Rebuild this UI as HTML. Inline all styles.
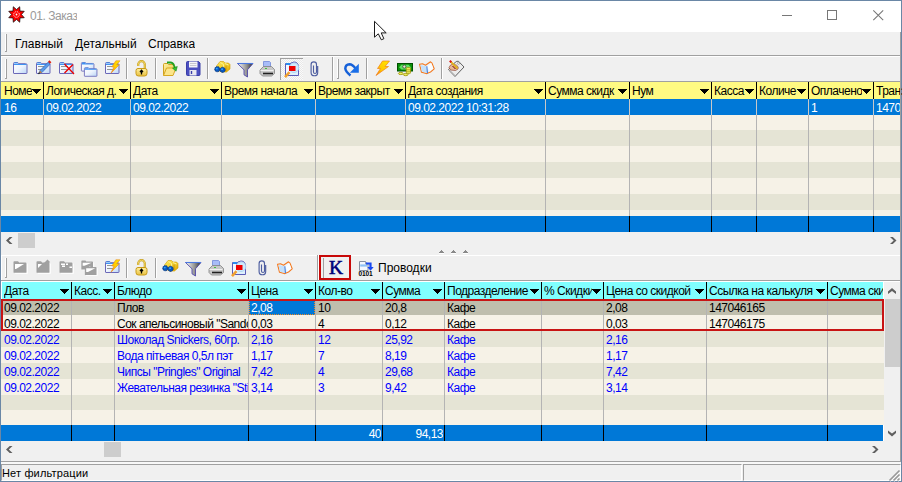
<!DOCTYPE html><html><head><meta charset="utf-8"><style>
*{margin:0;padding:0;box-sizing:border-box}
html,body{width:902px;height:482px;overflow:hidden;background:#f0f0f0;font-family:"Liberation Sans",sans-serif;font-size:12px;color:#000}
.g{letter-spacing:-0.5px}
.ab{position:absolute}
.t{position:absolute;white-space:nowrap;overflow:hidden;line-height:16px;height:16px}
.tri{position:absolute;width:0;height:0;border-left:4.5px solid transparent;border-right:4.5px solid transparent;border-top:5px solid #000}
svg{position:absolute;overflow:visible}

</style></head><body>
<div class="ab" style="left:0px;top:0px;width:902px;height:482px;background:#f0f0f0;border:1px solid #6a87a6"></div>
<div class="ab" style="left:1px;top:1px;width:900px;height:31px;background:#fff;"></div>
<svg style="left:8px;top:6px" width="17" height="17" viewBox="0 0 17 17"><path d="M11.71 0.74 L11.96 5.04 L16.26 5.29 L13.40 8.50 L16.26 11.71 L11.96 11.96 L11.71 16.26 L8.50 13.40 L5.29 16.26 L5.04 11.96 L0.74 11.71 L3.60 8.50 L0.74 5.29 L5.04 5.04 L5.29 0.74 L8.50 3.60Z" fill="#f00" stroke="#000" stroke-width="0.7" stroke-linejoin="miter"/><circle cx="8.5" cy="8.5" r="2.8" fill="none" stroke="#fff" stroke-width="1" stroke-dasharray="1.1 1.1"/><circle cx="8.5" cy="8.5" r="0.9" fill="#fff"/></svg>
<div class="t" style="left:30px;top:8px;font-size:12px;color:#9a9a9a;letter-spacing:-0.45px">01. Заказ</div>
<div class="ab" style="left:782px;top:15px;width:10px;height:1px;background:#777;"></div>
<div class="ab" style="left:827px;top:10px;width:10px;height:10px;background:transparent;border:1px solid #777"></div>
<svg style="left:873px;top:10px" width="11" height="11"><path d="M0.3 0.3L10.2 10.2M10.2 0.3L0.3 10.2" stroke="#777" stroke-width="1.05"/></svg>
<div class="ab" style="left:5px;top:34px;width:1px;height:18px;background:#fff;"></div>
<div class="ab" style="left:6px;top:34px;width:1px;height:18px;background:#a0a0a0;"></div>
<div class="ab" style="left:5px;top:51px;width:1px;height:1px;background:#a0a0a0;"></div>
<div class="t" style="left:15px;top:36px;font-size:12px">Главный</div>
<div class="t" style="left:75px;top:36px;font-size:12px">Детальный</div>
<div class="t" style="left:148px;top:36px;font-size:12px">Справка</div>
<div class="ab" style="left:1px;top:55px;width:900px;height:1px;background:#a0a0a0;"></div>
<div class="ab" style="left:1px;top:56px;width:900px;height:1px;background:#fff;"></div>
<div class="ab" style="left:1px;top:57px;width:1px;height:24px;background:#fff;"></div>
<div class="ab" style="left:1px;top:256px;width:1px;height:24px;background:#fff;"></div>
<div class="ab" style="left:5px;top:59px;width:1px;height:20px;background:#fff;"></div>
<div class="ab" style="left:6px;top:59px;width:1px;height:20px;background:#a0a0a0;"></div>
<div class="ab" style="left:5px;top:78px;width:1px;height:1px;background:#a0a0a0;"></div>
<svg width="0" height="0" style="position:absolute"><defs>
<linearGradient id="gFold" x1="0" y1="0" x2="1" y2="1"><stop offset="0" stop-color="#ffffff"/><stop offset="0.5" stop-color="#eef4fd"/><stop offset="1" stop-color="#b9d5f6"/></linearGradient>
<linearGradient id="gYel" x1="0" y1="0" x2="1" y2="1"><stop offset="0" stop-color="#fff2a8"/><stop offset="1" stop-color="#e8c040"/></linearGradient>
<linearGradient id="gZap" x1="1" y1="0" x2="0" y2="1"><stop offset="0" stop-color="#ffe600"/><stop offset="0.6" stop-color="#ffc800"/><stop offset="1" stop-color="#ff7a00"/></linearGradient>
<linearGradient id="gFun" x1="0" y1="0" x2="1" y2="0"><stop offset="0" stop-color="#ffffff"/><stop offset="0.6" stop-color="#909090"/><stop offset="1" stop-color="#303030"/></linearGradient>
<linearGradient id="gLock" x1="0" y1="0" x2="0" y2="1"><stop offset="0" stop-color="#fff0a0"/><stop offset="1" stop-color="#e8c040"/></linearGradient>
<linearGradient id="gBin" x1="0" y1="0" x2="1" y2="1"><stop offset="0" stop-color="#fff060"/><stop offset="1" stop-color="#e0a800"/></linearGradient>
</defs></svg>
<svg style="left:12px;top:59px" width="16" height="16" viewBox="0 0 16 16"><g transform="translate(0 0)"><path d="M1.5 14V4.5q0-1 1-1h3.2l1 1.2h6.8q1.5 0 1.5 1V14q0 .5-.5.5h-12.5q-.5 0-.5-.5z" fill="url(#gFold)" stroke="#6b68b8"/><path d="M2 4h4M2 5.5h12.5" stroke="#3f93f2" stroke-width="1.2"/></g></svg>
<svg style="left:35px;top:59px" width="16" height="16" viewBox="0 0 16 16"><g transform="translate(0 0)"><path d="M1.5 14V4.5q0-1 1-1h3.2l1 1.2h6.8q1.5 0 1.5 1V14q0 .5-.5.5h-12.5q-.5 0-.5-.5z" fill="url(#gFold)" stroke="#6b68b8"/><path d="M2 4h4M2 5.5h12.5" stroke="#3f93f2" stroke-width="1.2"/><path d="M3 7.5h7M3 10.5h7" stroke="#8a8a8a" stroke-width="0.9"/></g><path d="M4 14.5l1-3 8.2-8.4 2 2L7 13.5z" fill="#5b9ae8" stroke="#2a5cb0" stroke-width="0.6"/><path d="M4 14.5l1-3 2 2z" fill="#c08040"/><path d="M3.5 15l1-1.3" stroke="#202020" stroke-width="1.2"/><path d="M13 2.7l1.4-1.4 2 2-1.4 1.4z" fill="#e02010"/></svg>
<svg style="left:58px;top:59px" width="16" height="16" viewBox="0 0 16 16"><g transform="translate(0 0)"><path d="M1.5 14V4.5q0-1 1-1h3.2l1 1.2h6.8q1.5 0 1.5 1V14q0 .5-.5.5h-12.5q-.5 0-.5-.5z" fill="url(#gFold)" stroke="#6b68b8"/><path d="M2 4h4M2 5.5h12.5" stroke="#3f93f2" stroke-width="1.2"/><path d="M3 7.5h7M3 10.5h7" stroke="#8a8a8a" stroke-width="0.9"/></g><path d="M6.5 5L16 15M15 5.5L6.5 14" stroke="#ee0000" stroke-width="1.3"/></svg>
<svg style="left:80px;top:59px" width="16" height="16" viewBox="0 0 16 16"><g transform="translate(0 0.8) scale(0.93 0.78)"><g transform="translate(0 0)"><path d="M1.5 14V4.5q0-1 1-1h3.2l1 1.2h6.8q1.5 0 1.5 1V14q0 .5-.5.5h-12.5q-.5 0-.5-.5z" fill="url(#gFold)" stroke="#6b68b8"/><path d="M2 4h4M2 5.5h12.5" stroke="#3f93f2" stroke-width="1.2"/></g></g><g transform="translate(3 6) scale(0.93 0.78)"><g transform="translate(0 0)"><path d="M1.5 14V4.5q0-1 1-1h3.2l1 1.2h6.8q1.5 0 1.5 1V14q0 .5-.5.5h-12.5q-.5 0-.5-.5z" fill="url(#gFold)" stroke="#6b68b8"/><path d="M2 4h4M2 5.5h12.5" stroke="#3f93f2" stroke-width="1.2"/></g></g></svg>
<svg style="left:104px;top:59px" width="16" height="16" viewBox="0 0 16 16"><g transform="translate(0 0)"><path d="M1.5 14V4.5q0-1 1-1h3.2l1 1.2h6.8q1.5 0 1.5 1V14q0 .5-.5.5h-12.5q-.5 0-.5-.5z" fill="url(#gFold)" stroke="#6b68b8"/><path d="M2 4h4M2 5.5h12.5" stroke="#3f93f2" stroke-width="1.2"/><path d="M3 7.5h7M3 10.5h7" stroke="#8a8a8a" stroke-width="0.9"/></g><path d="M11.8 1.8h4.2l-3.3 3.9h2.6L7 14.2l3-6.2H7.8z" fill="url(#gZap)" stroke="#e88a20" stroke-width="0.6" stroke-linejoin="round"/></svg>
<div class="ab" style="left:126px;top:58px;width:1px;height:21px;background:#a0a0a0;"></div>
<div class="ab" style="left:127px;top:58px;width:1px;height:21px;background:#fff;"></div>
<svg style="left:133px;top:60px" width="16" height="16" viewBox="0 0 16 16"><path d="M5.2 6V4.5a3.3 3.3 0 0 1 6.6 0V9" fill="none" stroke="#c8a020" stroke-width="2.2"/><path d="M5.2 6V4.5a3.3 3.3 0 0 1 6.6 0V9" fill="none" stroke="#f8e070" stroke-width="0.8"/><path d="M3 10.5q0-2 2-2h7q2 0 2 2v3q0 2.5-2.5 2.5h-6q-2.5 0-2.5-2.5z" fill="url(#gLock)" stroke="#c89a18"/><path d="M8.5 10.5v4M7 12l1.5-1.8 1.5 1.8" stroke="#000" stroke-width="1.3" fill="none"/></svg>
<div class="ab" style="left:155px;top:58px;width:1px;height:21px;background:#a0a0a0;"></div>
<div class="ab" style="left:156px;top:58px;width:1px;height:21px;background:#fff;"></div>
<svg style="left:162px;top:60px" width="16" height="16" viewBox="0 0 16 16"><path d="M1.5 15.5V4.5q0-1 1-1h3l1 1h5q1 0 1 1v2" fill="url(#gYel)" stroke="#d0a020"/><path d="M1.5 15.5l3-7.5h9.5l-3 7.5z" fill="#fbe58a" stroke="#d8a820"/><path d="M5 2.5h3.5q2.5 0 3.5 3l1 2.5" fill="none" stroke="#20a020" stroke-width="1.8"/><path d="M10.5 8.2l4.8-1.8-1.2 4.8z" fill="#30c030" stroke="#108010" stroke-width="0.5"/></svg>
<svg style="left:185px;top:60px" width="16" height="16" viewBox="0 0 16 16"><path d="M1.5 2.5q0-1 1-1h11l1.5 1.5v11.5q0 1-1 1h-11.5q-1 0-1-1z" fill="#4b4fc0" stroke="#3a3ea8"/><rect x="4" y="1.5" width="8.5" height="6" fill="#f4f4f8"/><path d="M5 3.5h6.5M5 5.5h6.5" stroke="#c8c8d0"/><rect x="4.5" y="10" width="7" height="5.5" fill="#e8e8f0"/><path d="M6.5 11v3" stroke="#3a3ea8" stroke-width="1.4"/></svg>
<div class="ab" style="left:207px;top:58px;width:1px;height:21px;background:#a0a0a0;"></div>
<div class="ab" style="left:208px;top:58px;width:1px;height:21px;background:#fff;"></div>
<svg style="left:214px;top:59px" width="16" height="16" viewBox="0 0 16 16"><path d="M2.5 7L6 2.5h3.5l1.5 1.5h3.5L16 5.5v4.5l-3.5 3h-5L5.5 12H2.5z" fill="url(#gBin)" stroke="#d09a00" stroke-width="0.6" stroke-linejoin="round"/><path d="M6.5 3.5l3 2v4M11 4.5l3.5 1.5" stroke="#fff6a0" stroke-width="0.9" fill="none"/><path d="M12 6.5v5.5" stroke="#c89000" stroke-width="0.8"/><circle cx="3.3" cy="10.2" r="2.6" fill="#0a58c0" stroke="#063070" stroke-width="0.8" stroke-dasharray="1.2 0.6"/><circle cx="8.6" cy="10.8" r="2.6" fill="#0a58c0" stroke="#063070" stroke-width="0.8" stroke-dasharray="1.2 0.6"/><circle cx="2.8" cy="9.6" r="0.9" fill="#30a8ff"/><circle cx="8.1" cy="10.2" r="0.9" fill="#30a8ff"/></svg>
<svg style="left:237px;top:60px" width="16" height="16" viewBox="0 0 16 16"><path d="M0.5 3.5h15.5l-5.5 6.3v7.2L7 14.8V9.8z" fill="url(#gFun)" stroke="#5048a8" stroke-width="0.9" stroke-linejoin="round"/><path d="M0.5 3.5h15.5" stroke="#4a78e0" stroke-width="1.1"/></svg>
<svg style="left:259px;top:60px" width="16" height="16" viewBox="0 0 16 16"><path d="M4.5 1.5h6l1 1v5h-7z" fill="#a8bcf8" stroke="#7088d8" stroke-width="0.8"/><path d="M1 10l3.5-3.5h8l3 3v4l-3 2.5h-9l-2.5-2.5z" fill="#c8c8c8" stroke="#808080" stroke-width="0.8"/><path d="M1.5 10.5h13" stroke="#f0f0f0"/><path d="M4 13.5h10" stroke="#202020" stroke-width="1.6"/><rect x="6" y="8" width="2" height="1" fill="#40c040"/></svg>
<div class="ab" style="left:280px;top:58px;width:23px;height:22px;border-left:1px solid #a0a0a0;border-top:1px solid #a0a0a0;background:repeating-conic-gradient(#fafafa 0 25%, #e8e8e8 0 50%) 0 0/2px 2px"></div>
<svg style="left:284px;top:61px" width="16" height="16" viewBox="0 0 16 16"><path d="M1.5 14.5V2.5h5v12z" fill="#f4f8ff" stroke="#5a5cb8"/><path d="M2 3h4" stroke="#2a8cf0" stroke-width="2"/><path d="M6 14.5h8.5V6.5Q14.5 1 10 1Q6 1 5.8 5" fill="#def0fc" stroke="#5a5cb8"/><circle cx="10" cy="6.8" r="4.8" fill="#cfeafc" stroke="#a8d0f0" stroke-width="0.8"/><rect x="5" y="5" width="6.5" height="5" fill="#ee0000"/><path d="M1 16.2l4.5-5" stroke="#f0a030" stroke-width="2.6"/></svg>
<svg style="left:306px;top:60px" width="16" height="16" viewBox="0 0 16 16"><path d="M7.5 5.5V12a1.5 1.5 0 0 0 3 0V4.5a2.7 2.7 0 0 0-5.4 0V12.5a3.3 3.3 0 0 0 6.6 0V6" fill="none" stroke="#4e5ea0" stroke-width="1.15"/></svg>
<div class="ab" style="left:332px;top:57px;width:1px;height:24px;background:#a0a0a0;"></div>
<div class="ab" style="left:333px;top:57px;width:1px;height:24px;background:#fff;"></div>
<div class="ab" style="left:337px;top:59px;width:1px;height:20px;background:#fff;"></div>
<div class="ab" style="left:338px;top:59px;width:1px;height:20px;background:#a0a0a0;"></div>
<div class="ab" style="left:337px;top:78px;width:1px;height:1px;background:#a0a0a0;"></div>
<svg style="left:343px;top:60px" width="16" height="16" viewBox="0 0 16 16"><path d="M7.5 15.5Q2.5 11.5 2.3 8.5Q2.5 4.5 6.5 4.3Q9.5 4.3 12.5 8.5" fill="none" stroke="#1560d8" stroke-width="2.5"/><path d="M15.8 3.8V12.8H6.8z" fill="#1a6ee8"/></svg>
<div class="ab" style="left:366px;top:58px;width:1px;height:21px;background:#a0a0a0;"></div>
<div class="ab" style="left:367px;top:58px;width:1px;height:21px;background:#fff;"></div>
<svg style="left:374px;top:60px" width="16" height="16" viewBox="0 0 16 16"><path d="M8.5 1h7l-4.5 5.5h3.5L2 15.5l4.5-7H3.5z" fill="url(#gZap)" stroke="#f08018" stroke-width="0.7" stroke-linejoin="round"/></svg>
<svg style="left:397px;top:60px" width="16" height="16" viewBox="0 0 16 16"><rect x="0.5" y="3.5" width="15" height="7.5" fill="#0a900a" stroke="#005000"/><path d="M2 7.2L4.5 4.8h7L14 7.2l-2.5 2.3h-7z" fill="#60e060"/><circle cx="7.3" cy="6.6" r="1.6" fill="#e8e8d0" stroke="#303030" stroke-width="0.7"/><ellipse cx="3.8" cy="13.5" rx="2.4" ry="1.1" fill="#f0f060" stroke="#9a9000" stroke-width="0.8"/><ellipse cx="8.7" cy="14.6" rx="2.4" ry="1.1" fill="#f0f060" stroke="#9a9000" stroke-width="0.8"/><rect x="9.3" y="7.6" width="4.2" height="6" rx="1" fill="#f0f060" stroke="#9a9000" stroke-width="0.8"/><path d="M9.5 9.8h4M9.5 11.8h4" stroke="#9a9000" stroke-width="0.7"/></svg>
<svg style="left:419px;top:60px" width="16" height="16" viewBox="0 0 16 16"><path d="M0.5 4.2L3.5 3.8 6.5 5.3 11.5 1.8 13 3.2 15.2 8.8 11.5 12 8 13.6 2.5 12.3z" fill="#eaf4fd" stroke="#f57a20" stroke-width="1.1" stroke-linejoin="round"/><path d="M1.5 5l5.5 1.3 1.5 6.8-5.5-1.3z" fill="#c4e0fa"/><path d="M8.3 6.5l4-3.3 2 5.3-3.5 3z" fill="#fafdff"/><path d="M7.8 6.3L8.5 13.3" stroke="#4a7ed8" stroke-width="1.1"/></svg>
<div class="ab" style="left:441px;top:58px;width:1px;height:21px;background:#a0a0a0;"></div>
<div class="ab" style="left:442px;top:58px;width:1px;height:21px;background:#fff;"></div>
<svg style="left:448px;top:60px" width="16" height="16" viewBox="0 0 16 16"><path d="M0.5 9.5L7.5 2Q8.5 1 10.5 1.3L16 7 7 16.5z" fill="#ececec" stroke="#606060" stroke-width="1" stroke-linejoin="round"/><path d="M1.5 10.5L7 16" stroke="#b0b0b0" stroke-width="1.6"/><circle cx="10.5" cy="3.3" r="1" fill="#fff" stroke="#808080" stroke-width="0.6"/><path d="M1 7.5Q2 4.5 5 4l3.5 1.2Q11 6.5 10 9L7.5 10.5L2.5 10z" fill="#e8b898" stroke="#803020" stroke-width="0.6"/><path d="M2.5 1.5L9.5 8.5" stroke="#e0b020" stroke-width="1.8"/><path d="M1.8 0.8L3.3 2.3" stroke="#e01010" stroke-width="2"/><path d="M4.5 6l3 3" stroke="#700000" stroke-width="1"/></svg>
<div class="ab" style="left:1px;top:81px;width:900px;height:1px;background:#a0a0a0;"></div>
<div class="ab" style="left:1px;top:82px;width:900px;height:17px;background:#fffa82;"></div>
<div class="t g" style="left:4px;top:83px;width:41px;color:#000;">Номе</div>
<div class="ab" style="left:32px;top:82px;width:10px;height:17px;background:#fffa82"></div>
<svg style="left:32px;top:89px" width="9" height="5" shape-rendering="crispEdges"><path d="M0 0h9v1H0zM1 1h7v1H1zM2 2h5v1H2zM3 3h3v1H3zM4 4h1v1H4z" fill="#000"/></svg>
<div class="t g" style="left:46px;top:83px;width:86px;color:#000;">Логическая д.</div>
<div class="ab" style="left:119px;top:82px;width:10px;height:17px;background:#fffa82"></div>
<svg style="left:119px;top:89px" width="9" height="5" shape-rendering="crispEdges"><path d="M0 0h9v1H0zM1 1h7v1H1zM2 2h5v1H2zM3 3h3v1H3zM4 4h1v1H4z" fill="#000"/></svg>
<div class="t g" style="left:133px;top:83px;width:90px;color:#000;">Дата</div>
<div class="ab" style="left:210px;top:82px;width:10px;height:17px;background:#fffa82"></div>
<svg style="left:210px;top:89px" width="9" height="5" shape-rendering="crispEdges"><path d="M0 0h9v1H0zM1 1h7v1H1zM2 2h5v1H2zM3 3h3v1H3zM4 4h1v1H4z" fill="#000"/></svg>
<div class="t g" style="left:224px;top:83px;width:93px;color:#000;">Время начала</div>
<div class="ab" style="left:304px;top:82px;width:10px;height:17px;background:#fffa82"></div>
<svg style="left:304px;top:89px" width="9" height="5" shape-rendering="crispEdges"><path d="M0 0h9v1H0zM1 1h7v1H1zM2 2h5v1H2zM3 3h3v1H3zM4 4h1v1H4z" fill="#000"/></svg>
<div class="t g" style="left:318px;top:83px;width:89px;color:#000;">Время закрыт</div>
<div class="ab" style="left:394px;top:82px;width:10px;height:17px;background:#fffa82"></div>
<svg style="left:394px;top:89px" width="9" height="5" shape-rendering="crispEdges"><path d="M0 0h9v1H0zM1 1h7v1H1zM2 2h5v1H2zM3 3h3v1H3zM4 4h1v1H4z" fill="#000"/></svg>
<div class="t g" style="left:408px;top:83px;width:139px;color:#000;">Дата создания</div>
<div class="ab" style="left:534px;top:82px;width:10px;height:17px;background:#fffa82"></div>
<svg style="left:534px;top:89px" width="9" height="5" shape-rendering="crispEdges"><path d="M0 0h9v1H0zM1 1h7v1H1zM2 2h5v1H2zM3 3h3v1H3zM4 4h1v1H4z" fill="#000"/></svg>
<div class="t g" style="left:548px;top:83px;width:83px;color:#000;">Сумма скидк</div>
<div class="ab" style="left:618px;top:82px;width:10px;height:17px;background:#fffa82"></div>
<svg style="left:618px;top:89px" width="9" height="5" shape-rendering="crispEdges"><path d="M0 0h9v1H0zM1 1h7v1H1zM2 2h5v1H2zM3 3h3v1H3zM4 4h1v1H4z" fill="#000"/></svg>
<div class="t g" style="left:632px;top:83px;width:81px;color:#000;">Нум</div>
<div class="ab" style="left:700px;top:82px;width:10px;height:17px;background:#fffa82"></div>
<svg style="left:700px;top:89px" width="9" height="5" shape-rendering="crispEdges"><path d="M0 0h9v1H0zM1 1h7v1H1zM2 2h5v1H2zM3 3h3v1H3zM4 4h1v1H4z" fill="#000"/></svg>
<div class="t g" style="left:714px;top:83px;width:44px;color:#000;">Касса</div>
<div class="ab" style="left:745px;top:82px;width:10px;height:17px;background:#fffa82"></div>
<svg style="left:745px;top:89px" width="9" height="5" shape-rendering="crispEdges"><path d="M0 0h9v1H0zM1 1h7v1H1zM2 2h5v1H2zM3 3h3v1H3zM4 4h1v1H4z" fill="#000"/></svg>
<div class="t g" style="left:759px;top:83px;width:51px;color:#000;">Количе</div>
<div class="ab" style="left:797px;top:82px;width:10px;height:17px;background:#fffa82"></div>
<svg style="left:797px;top:89px" width="9" height="5" shape-rendering="crispEdges"><path d="M0 0h9v1H0zM1 1h7v1H1zM2 2h5v1H2zM3 3h3v1H3zM4 4h1v1H4z" fill="#000"/></svg>
<div class="t g" style="left:811px;top:83px;width:64px;color:#000;">Оплачено</div>
<div class="ab" style="left:862px;top:82px;width:10px;height:17px;background:#fffa82"></div>
<svg style="left:862px;top:89px" width="9" height="5" shape-rendering="crispEdges"><path d="M0 0h9v1H0zM1 1h7v1H1zM2 2h5v1H2zM3 3h3v1H3zM4 4h1v1H4z" fill="#000"/></svg>
<div class="t g" style="left:876px;top:83px;width:27px;color:#000;">Транзакция</div>
<div class="ab" style="left:43px;top:82px;width:1px;height:17px;background:#000;"></div>
<div class="ab" style="left:130px;top:82px;width:1px;height:17px;background:#000;"></div>
<div class="ab" style="left:221px;top:82px;width:1px;height:17px;background:#000;"></div>
<div class="ab" style="left:315px;top:82px;width:1px;height:17px;background:#000;"></div>
<div class="ab" style="left:405px;top:82px;width:1px;height:17px;background:#000;"></div>
<div class="ab" style="left:545px;top:82px;width:1px;height:17px;background:#000;"></div>
<div class="ab" style="left:629px;top:82px;width:1px;height:17px;background:#000;"></div>
<div class="ab" style="left:711px;top:82px;width:1px;height:17px;background:#000;"></div>
<div class="ab" style="left:756px;top:82px;width:1px;height:17px;background:#000;"></div>
<div class="ab" style="left:808px;top:82px;width:1px;height:17px;background:#000;"></div>
<div class="ab" style="left:873px;top:82px;width:1px;height:17px;background:#000;"></div>
<div class="ab" style="left:1px;top:99px;width:900px;height:16px;background:#0078d7;"></div>
<div class="ab" style="left:1px;top:115px;width:900px;height:15px;background:#f6f2e7;"></div>
<div class="ab" style="left:1px;top:130px;width:900px;height:16px;background:#e5e4d5;"></div>
<div class="ab" style="left:1px;top:146px;width:900px;height:16px;background:#f6f2e7;"></div>
<div class="ab" style="left:1px;top:162px;width:900px;height:16px;background:#e5e4d5;"></div>
<div class="ab" style="left:1px;top:178px;width:900px;height:16px;background:#f6f2e7;"></div>
<div class="ab" style="left:1px;top:194px;width:900px;height:16px;background:#e5e4d5;"></div>
<div class="ab" style="left:1px;top:210px;width:900px;height:6px;background:#f6f2e7;"></div>
<div class="ab" style="left:43px;top:99px;width:1px;height:117px;background:#b4b4b4;"></div>
<div class="ab" style="left:130px;top:99px;width:1px;height:117px;background:#b4b4b4;"></div>
<div class="ab" style="left:221px;top:99px;width:1px;height:117px;background:#b4b4b4;"></div>
<div class="ab" style="left:315px;top:99px;width:1px;height:117px;background:#b4b4b4;"></div>
<div class="ab" style="left:405px;top:99px;width:1px;height:117px;background:#b4b4b4;"></div>
<div class="ab" style="left:545px;top:99px;width:1px;height:117px;background:#b4b4b4;"></div>
<div class="ab" style="left:629px;top:99px;width:1px;height:117px;background:#b4b4b4;"></div>
<div class="ab" style="left:711px;top:99px;width:1px;height:117px;background:#b4b4b4;"></div>
<div class="ab" style="left:756px;top:99px;width:1px;height:117px;background:#b4b4b4;"></div>
<div class="ab" style="left:808px;top:99px;width:1px;height:117px;background:#b4b4b4;"></div>
<div class="ab" style="left:873px;top:99px;width:1px;height:117px;background:#b4b4b4;"></div>
<div class="ab" style="left:43px;top:99px;width:1px;height:16px;background:#c8c8c8;"></div>
<div class="ab" style="left:130px;top:99px;width:1px;height:16px;background:#c8c8c8;"></div>
<div class="ab" style="left:221px;top:99px;width:1px;height:16px;background:#c8c8c8;"></div>
<div class="ab" style="left:315px;top:99px;width:1px;height:16px;background:#c8c8c8;"></div>
<div class="ab" style="left:405px;top:99px;width:1px;height:16px;background:#c8c8c8;"></div>
<div class="ab" style="left:545px;top:99px;width:1px;height:16px;background:#c8c8c8;"></div>
<div class="ab" style="left:629px;top:99px;width:1px;height:16px;background:#c8c8c8;"></div>
<div class="ab" style="left:711px;top:99px;width:1px;height:16px;background:#c8c8c8;"></div>
<div class="ab" style="left:756px;top:99px;width:1px;height:16px;background:#c8c8c8;"></div>
<div class="ab" style="left:808px;top:99px;width:1px;height:16px;background:#c8c8c8;"></div>
<div class="ab" style="left:873px;top:99px;width:1px;height:16px;background:#c8c8c8;"></div>
<div class="t g" style="left:4px;top:100px;width:39px;color:#fff;">16</div>
<div class="t g" style="left:46px;top:100px;width:84px;color:#fff;">09.02.2022</div>
<div class="t g" style="left:133px;top:100px;width:88px;color:#fff;">09.02.2022</div>
<div class="t g" style="left:408px;top:100px;width:137px;color:#fff;">09.02.2022 10:31:28</div>
<div class="t g" style="left:811px;top:100px;width:62px;color:#fff;">1</div>
<div class="t g" style="left:876px;top:100px;width:25px;color:#fff;">147046</div>
<div class="ab" style="left:1px;top:216px;width:900px;height:16px;background:#0078d7;"></div>
<div class="ab" style="left:43px;top:216px;width:1px;height:16px;background:#000;"></div>
<div class="ab" style="left:130px;top:216px;width:1px;height:16px;background:#000;"></div>
<div class="ab" style="left:221px;top:216px;width:1px;height:16px;background:#000;"></div>
<div class="ab" style="left:315px;top:216px;width:1px;height:16px;background:#000;"></div>
<div class="ab" style="left:405px;top:216px;width:1px;height:16px;background:#000;"></div>
<div class="ab" style="left:545px;top:216px;width:1px;height:16px;background:#000;"></div>
<div class="ab" style="left:629px;top:216px;width:1px;height:16px;background:#000;"></div>
<div class="ab" style="left:711px;top:216px;width:1px;height:16px;background:#000;"></div>
<div class="ab" style="left:756px;top:216px;width:1px;height:16px;background:#000;"></div>
<div class="ab" style="left:808px;top:216px;width:1px;height:16px;background:#000;"></div>
<div class="ab" style="left:873px;top:216px;width:1px;height:16px;background:#000;"></div>
<div class="ab" style="left:1px;top:232px;width:900px;height:16px;background:#f0f0f0;"></div>
<div class="ab" style="left:18px;top:233px;width:17px;height:15px;background:#cdcdcd;"></div>
<svg style="left:6px;top:237px" width="6" height="7"><path d="M6.5 0H3.7L0 3.5 3.7 7h2.8L2.8 3.5z" fill="#606060"/></svg>
<svg style="left:890px;top:237px" width="6" height="7"><path d="M0 0h2.8l3.7 3.5-3.7 3.5H0l3.7-3.5z" fill="#606060"/></svg>
<svg style="left:438px;top:250px" width="7" height="5" shape-rendering="crispEdges"><path d="M3 0h1v1H3zM2 1h3v1H2zM1 2h5v1H1z" fill="#8a8a8a"/><path d="M1 3h5v1H1z" fill="#fff"/></svg>
<svg style="left:450px;top:250px" width="7" height="5" shape-rendering="crispEdges"><path d="M3 0h1v1H3zM2 1h3v1H2zM1 2h5v1H1z" fill="#8a8a8a"/><path d="M1 3h5v1H1z" fill="#fff"/></svg>
<svg style="left:462px;top:250px" width="7" height="5" shape-rendering="crispEdges"><path d="M3 0h1v1H3zM2 1h3v1H2zM1 2h5v1H1z" fill="#8a8a8a"/><path d="M1 3h5v1H1z" fill="#fff"/></svg>
<div class="ab" style="left:1px;top:255px;width:900px;height:1px;background:#fff;"></div>
<div class="ab" style="left:5px;top:258px;width:1px;height:20px;background:#fff;"></div>
<div class="ab" style="left:6px;top:258px;width:1px;height:20px;background:#a0a0a0;"></div>
<div class="ab" style="left:5px;top:277px;width:1px;height:1px;background:#a0a0a0;"></div>
<svg style="left:12px;top:258px" width="16" height="16" viewBox="0 0 16 16"><g transform="translate(0 0) scale(1 1)"><path d="M2 15V4q0-.8.8-.8h3.7l1.2 1.3h6.3q1 0 1 1V15z" fill="#fff" transform="translate(.8 .8)"/><path d="M1.5 14.3V4q0-.8.8-.8h3.7l1.2 1.3h6.3q1 0 1 1v8.8q0 .5-.5.5H2q-.5 0-.5-.5z" fill="#a0a0a0"/><path d="M3 6h9l-8 5H3z" fill="#fff"/></g></svg>
<svg style="left:35px;top:258px" width="16" height="16" viewBox="0 0 16 16"><g transform="translate(0 0) scale(1 1)"><path d="M2 15V4q0-.8.8-.8h3.7l1.2 1.3h6.3q1 0 1 1V15z" fill="#fff" transform="translate(.8 .8)"/><path d="M1.5 14.3V4q0-.8.8-.8h3.7l1.2 1.3h6.3q1 0 1 1v8.8q0 .5-.5.5H2q-.5 0-.5-.5z" fill="#a0a0a0"/><path d="M3 6h4l-4 4z" fill="#fff"/></g><path d="M9 5l3.5-3.5 2.5 2.5-3 3z" fill="#a0a0a0"/></svg>
<svg style="left:58px;top:258px" width="16" height="16" viewBox="0 0 16 16"><g transform="translate(0 0) scale(1 1)"><path d="M2 15V4q0-.8.8-.8h3.7l1.2 1.3h6.3q1 0 1 1V15z" fill="#fff" transform="translate(.8 .8)"/><path d="M1.5 14.3V4q0-.8.8-.8h3.7l1.2 1.3h6.3q1 0 1 1v8.8q0 .5-.5.5H2q-.5 0-.5-.5z" fill="#a0a0a0"/><path d="M3 6.3h4M4 8.3h3M8 6.3h2M11.5 9.3h2.5" stroke="#fff" stroke-width="1.4"/></g></svg>
<svg style="left:80px;top:258px" width="16" height="16" viewBox="0 0 16 16"><g transform="translate(0 0) scale(0.9 0.78)"><path d="M2 15V4q0-.8.8-.8h3.7l1.2 1.3h6.3q1 0 1 1V15z" fill="#fff" transform="translate(.8 .8)"/><path d="M1.5 14.3V4q0-.8.8-.8h3.7l1.2 1.3h6.3q1 0 1 1v8.8q0 .5-.5.5H2q-.5 0-.5-.5z" fill="#a0a0a0"/><path d="M3 6h10l-8 4H3z" fill="#fff"/></g><g transform="translate(3.5 5.5) scale(0.9 0.78)"><path d="M2 15V4q0-.8.8-.8h3.7l1.2 1.3h6.3q1 0 1 1V15z" fill="#fff" transform="translate(.8 .8)"/><path d="M1.5 14.3V4q0-.8.8-.8h3.7l1.2 1.3h6.3q1 0 1 1v8.8q0 .5-.5.5H2q-.5 0-.5-.5z" fill="#a0a0a0"/><path d="M3 6h10l-8 5H3z" fill="#fff"/></g></svg>
<svg style="left:104px;top:258px" width="16" height="16" viewBox="0 0 16 16"><g transform="translate(0 0)"><path d="M1.5 14V4.5q0-1 1-1h3.2l1 1.2h6.8q1.5 0 1.5 1V14q0 .5-.5.5h-12.5q-.5 0-.5-.5z" fill="url(#gFold)" stroke="#6b68b8"/><path d="M2 4h4M2 5.5h12.5" stroke="#3f93f2" stroke-width="1.2"/><path d="M3 7.5h7M3 10.5h7" stroke="#8a8a8a" stroke-width="0.9"/></g><path d="M11.8 1.8h4.2l-3.3 3.9h2.6L7 14.2l3-6.2H7.8z" fill="url(#gZap)" stroke="#e88a20" stroke-width="0.6" stroke-linejoin="round"/></svg>
<div class="ab" style="left:126px;top:258px;width:1px;height:20px;background:#a0a0a0;"></div>
<div class="ab" style="left:127px;top:258px;width:1px;height:20px;background:#fff;"></div>
<svg style="left:133px;top:259px" width="16" height="16" viewBox="0 0 16 16"><path d="M5.2 6V4.5a3.3 3.3 0 0 1 6.6 0V9" fill="none" stroke="#c8a020" stroke-width="2.2"/><path d="M5.2 6V4.5a3.3 3.3 0 0 1 6.6 0V9" fill="none" stroke="#f8e070" stroke-width="0.8"/><path d="M3 10.5q0-2 2-2h7q2 0 2 2v3q0 2.5-2.5 2.5h-6q-2.5 0-2.5-2.5z" fill="url(#gLock)" stroke="#c89a18"/><path d="M8.5 10.5v4M7 12l1.5-1.8 1.5 1.8" stroke="#000" stroke-width="1.3" fill="none"/></svg>
<div class="ab" style="left:155px;top:258px;width:1px;height:20px;background:#a0a0a0;"></div>
<div class="ab" style="left:156px;top:258px;width:1px;height:20px;background:#fff;"></div>
<svg style="left:162px;top:258px" width="16" height="16" viewBox="0 0 16 16"><path d="M2.5 7L6 2.5h3.5l1.5 1.5h3.5L16 5.5v4.5l-3.5 3h-5L5.5 12H2.5z" fill="url(#gBin)" stroke="#d09a00" stroke-width="0.6" stroke-linejoin="round"/><path d="M6.5 3.5l3 2v4M11 4.5l3.5 1.5" stroke="#fff6a0" stroke-width="0.9" fill="none"/><path d="M12 6.5v5.5" stroke="#c89000" stroke-width="0.8"/><circle cx="3.3" cy="10.2" r="2.6" fill="#0a58c0" stroke="#063070" stroke-width="0.8" stroke-dasharray="1.2 0.6"/><circle cx="8.6" cy="10.8" r="2.6" fill="#0a58c0" stroke="#063070" stroke-width="0.8" stroke-dasharray="1.2 0.6"/><circle cx="2.8" cy="9.6" r="0.9" fill="#30a8ff"/><circle cx="8.1" cy="10.2" r="0.9" fill="#30a8ff"/></svg>
<svg style="left:185px;top:259px" width="16" height="16" viewBox="0 0 16 16"><path d="M0.5 3.5h15.5l-5.5 6.3v7.2L7 14.8V9.8z" fill="url(#gFun)" stroke="#5048a8" stroke-width="0.9" stroke-linejoin="round"/><path d="M0.5 3.5h15.5" stroke="#4a78e0" stroke-width="1.1"/></svg>
<svg style="left:208px;top:259px" width="16" height="16" viewBox="0 0 16 16"><path d="M4.5 1.5h6l1 1v5h-7z" fill="#a8bcf8" stroke="#7088d8" stroke-width="0.8"/><path d="M1 10l3.5-3.5h8l3 3v4l-3 2.5h-9l-2.5-2.5z" fill="#c8c8c8" stroke="#808080" stroke-width="0.8"/><path d="M1.5 10.5h13" stroke="#f0f0f0"/><path d="M4 13.5h10" stroke="#202020" stroke-width="1.6"/><rect x="6" y="8" width="2" height="1" fill="#40c040"/></svg>
<svg style="left:231px;top:260px" width="16" height="16" viewBox="0 0 16 16"><path d="M1.5 14.5V2.5h5v12z" fill="#f4f8ff" stroke="#5a5cb8"/><path d="M2 3h4" stroke="#2a8cf0" stroke-width="2"/><path d="M6 14.5h8.5V6.5Q14.5 1 10 1Q6 1 5.8 5" fill="#def0fc" stroke="#5a5cb8"/><circle cx="10" cy="6.8" r="4.8" fill="#cfeafc" stroke="#a8d0f0" stroke-width="0.8"/><rect x="5" y="5" width="6.5" height="5" fill="#ee0000"/><path d="M1 16.2l4.5-5" stroke="#f0a030" stroke-width="2.6"/></svg>
<svg style="left:254px;top:259px" width="16" height="16" viewBox="0 0 16 16"><path d="M7.5 5.5V12a1.5 1.5 0 0 0 3 0V4.5a2.7 2.7 0 0 0-5.4 0V12.5a3.3 3.3 0 0 0 6.6 0V6" fill="none" stroke="#4e5ea0" stroke-width="1.15"/></svg>
<svg style="left:277px;top:260px" width="16" height="16" viewBox="0 0 16 16"><path d="M0.5 4.2L3.5 3.8 6.5 5.3 11.5 1.8 13 3.2 15.2 8.8 11.5 12 8 13.6 2.5 12.3z" fill="#eaf4fd" stroke="#f57a20" stroke-width="1.1" stroke-linejoin="round"/><path d="M1.5 5l5.5 1.3 1.5 6.8-5.5-1.3z" fill="#c4e0fa"/><path d="M8.3 6.5l4-3.3 2 5.3-3.5 3z" fill="#fafdff"/><path d="M7.8 6.3L8.5 13.3" stroke="#4a7ed8" stroke-width="1.1"/></svg>
<div class="ab" style="left:317px;top:255px;width:1px;height:25px;background:#a0a0a0;"></div>
<div class="ab" style="left:318px;top:255px;width:1px;height:25px;background:#fff;"></div>
<div class="ab" style="left:319px;top:255px;width:32px;height:25px;background:#f0f0f0;border:2px solid #c80808"></div>
<div class="ab" style="left:323px;top:258px;width:1px;height:20px;background:#a0a0a0;"></div>
<div class="ab" style="left:329px;top:257px;font-family:'Liberation Serif',serif;font-size:19.5px;line-height:22px;color:#00007a;font-weight:normal;-webkit-text-stroke:0.6px #00007a;white-space:nowrap">K</div>
<svg style="left:358px;top:260px" width="18" height="17" viewBox="0 0 18 17"><path d="M1.5 1.5h6l2.5 2.5v6.5h-8.5z" fill="#f4f8fe" stroke="#8890a0"/><path d="M7.5 1.5v2.5h2.5" fill="#d8e4f4" stroke="#8890a0" stroke-width="0.8"/><path d="M2.2 5.5h7" stroke="#8cc0f4" stroke-width="2.2"/><path d="M8 3.5h4.5v4" fill="none" stroke="#1848f0" stroke-width="2.2"/><path d="M9.3 7h6.4l-3.2 3.8z" fill="#1848f0"/><text x="0.6" y="16.3" font-size="6.6" font-family="Liberation Sans" font-weight="bold" fill="#000" letter-spacing="-0.2">0101</text></svg>
<div class="t" style="left:378px;top:260px;font-size:12px">Проводки</div>
<div class="ab" style="left:1px;top:280px;width:900px;height:1px;background:#a0a0a0;"></div>
<div class="ab" style="left:1px;top:281px;width:900px;height:1px;background:#fff;"></div>
<div class="ab" style="left:1px;top:282px;width:883px;height:17px;background:#80ffff;"></div>
<div class="t g" style="left:4px;top:283px;width:69px;color:#000;">Дата</div>
<div class="ab" style="left:60px;top:282px;width:10px;height:17px;background:#80ffff"></div>
<svg style="left:60px;top:289px" width="9" height="5" shape-rendering="crispEdges"><path d="M0 0h9v1H0zM1 1h7v1H1zM2 2h5v1H2zM3 3h3v1H3zM4 4h1v1H4z" fill="#000"/></svg>
<div class="t g" style="left:74px;top:283px;width:42px;color:#000;">Касс.</div>
<div class="ab" style="left:103px;top:282px;width:10px;height:17px;background:#80ffff"></div>
<svg style="left:103px;top:289px" width="9" height="5" shape-rendering="crispEdges"><path d="M0 0h9v1H0zM1 1h7v1H1zM2 2h5v1H2zM3 3h3v1H3zM4 4h1v1H4z" fill="#000"/></svg>
<div class="t g" style="left:117px;top:283px;width:133px;color:#000;">Блюдо</div>
<div class="ab" style="left:237px;top:282px;width:10px;height:17px;background:#80ffff"></div>
<svg style="left:237px;top:289px" width="9" height="5" shape-rendering="crispEdges"><path d="M0 0h9v1H0zM1 1h7v1H1zM2 2h5v1H2zM3 3h3v1H3zM4 4h1v1H4z" fill="#000"/></svg>
<div class="t g" style="left:251px;top:283px;width:66px;color:#000;">Цена</div>
<div class="ab" style="left:304px;top:282px;width:10px;height:17px;background:#80ffff"></div>
<svg style="left:304px;top:289px" width="9" height="5" shape-rendering="crispEdges"><path d="M0 0h9v1H0zM1 1h7v1H1zM2 2h5v1H2zM3 3h3v1H3zM4 4h1v1H4z" fill="#000"/></svg>
<div class="t g" style="left:318px;top:283px;width:66px;color:#000;">Кол-во</div>
<div class="ab" style="left:371px;top:282px;width:10px;height:17px;background:#80ffff"></div>
<svg style="left:371px;top:289px" width="9" height="5" shape-rendering="crispEdges"><path d="M0 0h9v1H0zM1 1h7v1H1zM2 2h5v1H2zM3 3h3v1H3zM4 4h1v1H4z" fill="#000"/></svg>
<div class="t g" style="left:385px;top:283px;width:61px;color:#000;">Сумма</div>
<div class="ab" style="left:433px;top:282px;width:10px;height:17px;background:#80ffff"></div>
<svg style="left:433px;top:289px" width="9" height="5" shape-rendering="crispEdges"><path d="M0 0h9v1H0zM1 1h7v1H1zM2 2h5v1H2zM3 3h3v1H3zM4 4h1v1H4z" fill="#000"/></svg>
<div class="t g" style="left:447px;top:283px;width:96px;color:#000;">Подразделение</div>
<div class="ab" style="left:530px;top:282px;width:10px;height:17px;background:#80ffff"></div>
<svg style="left:530px;top:289px" width="9" height="5" shape-rendering="crispEdges"><path d="M0 0h9v1H0zM1 1h7v1H1zM2 2h5v1H2zM3 3h3v1H3zM4 4h1v1H4z" fill="#000"/></svg>
<div class="t g" style="left:544px;top:283px;width:61px;color:#000;">% Скидки</div>
<div class="ab" style="left:592px;top:282px;width:10px;height:17px;background:#80ffff"></div>
<svg style="left:592px;top:289px" width="9" height="5" shape-rendering="crispEdges"><path d="M0 0h9v1H0zM1 1h7v1H1zM2 2h5v1H2zM3 3h3v1H3zM4 4h1v1H4z" fill="#000"/></svg>
<div class="t g" style="left:606px;top:283px;width:102px;color:#000;">Цена со скидкой</div>
<div class="ab" style="left:695px;top:282px;width:10px;height:17px;background:#80ffff"></div>
<svg style="left:695px;top:289px" width="9" height="5" shape-rendering="crispEdges"><path d="M0 0h9v1H0zM1 1h7v1H1zM2 2h5v1H2zM3 3h3v1H3zM4 4h1v1H4z" fill="#000"/></svg>
<div class="t g" style="left:709px;top:283px;width:120px;color:#000;">Ссылка на калькуля</div>
<div class="ab" style="left:816px;top:282px;width:10px;height:17px;background:#80ffff"></div>
<svg style="left:816px;top:289px" width="9" height="5" shape-rendering="crispEdges"><path d="M0 0h9v1H0zM1 1h7v1H1zM2 2h5v1H2zM3 3h3v1H3zM4 4h1v1H4z" fill="#000"/></svg>
<div class="t g" style="left:830px;top:283px;width:56px;color:#000;">Сумма скидки</div>
<div class="ab" style="left:71px;top:282px;width:1px;height:17px;background:#000;"></div>
<div class="ab" style="left:114px;top:282px;width:1px;height:17px;background:#000;"></div>
<div class="ab" style="left:248px;top:282px;width:1px;height:17px;background:#000;"></div>
<div class="ab" style="left:315px;top:282px;width:1px;height:17px;background:#000;"></div>
<div class="ab" style="left:382px;top:282px;width:1px;height:17px;background:#000;"></div>
<div class="ab" style="left:444px;top:282px;width:1px;height:17px;background:#000;"></div>
<div class="ab" style="left:541px;top:282px;width:1px;height:17px;background:#000;"></div>
<div class="ab" style="left:603px;top:282px;width:1px;height:17px;background:#000;"></div>
<div class="ab" style="left:706px;top:282px;width:1px;height:17px;background:#000;"></div>
<div class="ab" style="left:827px;top:282px;width:1px;height:17px;background:#000;"></div>
<div class="ab" style="left:883px;top:281px;width:1px;height:18px;background:#fff;"></div>
<div class="ab" style="left:1px;top:281px;width:1px;height:18px;background:#fff;"></div>
<div class="ab" style="left:1px;top:299px;width:883px;height:16px;background:#bfbead;"></div>
<div class="ab" style="left:1px;top:315px;width:883px;height:16px;background:#f6f2e7;"></div>
<div class="ab" style="left:1px;top:331px;width:883px;height:16px;background:#e5e4d5;"></div>
<div class="ab" style="left:1px;top:347px;width:883px;height:16px;background:#f6f2e7;"></div>
<div class="ab" style="left:1px;top:363px;width:883px;height:16px;background:#e5e4d5;"></div>
<div class="ab" style="left:1px;top:379px;width:883px;height:16px;background:#f6f2e7;"></div>
<div class="ab" style="left:1px;top:395px;width:883px;height:15px;background:#e5e4d5;"></div>
<div class="ab" style="left:1px;top:410px;width:883px;height:15px;background:#f6f2e7;"></div>
<div class="ab" style="left:71px;top:299px;width:1px;height:126px;background:#b4b4b4;"></div>
<div class="ab" style="left:114px;top:299px;width:1px;height:126px;background:#b4b4b4;"></div>
<div class="ab" style="left:248px;top:299px;width:1px;height:126px;background:#b4b4b4;"></div>
<div class="ab" style="left:315px;top:299px;width:1px;height:126px;background:#b4b4b4;"></div>
<div class="ab" style="left:382px;top:299px;width:1px;height:126px;background:#b4b4b4;"></div>
<div class="ab" style="left:444px;top:299px;width:1px;height:126px;background:#b4b4b4;"></div>
<div class="ab" style="left:541px;top:299px;width:1px;height:126px;background:#b4b4b4;"></div>
<div class="ab" style="left:603px;top:299px;width:1px;height:126px;background:#b4b4b4;"></div>
<div class="ab" style="left:706px;top:299px;width:1px;height:126px;background:#b4b4b4;"></div>
<div class="ab" style="left:827px;top:299px;width:1px;height:126px;background:#b4b4b4;"></div>
<div class="ab" style="left:249px;top:300px;width:66px;height:15px;background:#0078d7;"></div>
<div class="ab" style="left:249px;top:300px;width:66px;height:15px;background:transparent;border:1px dotted #f08a20"></div>
<div class="t g" style="left:4px;top:300px;width:67px;color:#000;">09.02.2022</div>
<div class="t g" style="left:117px;top:300px;width:131px;color:#000;">Плов</div>
<div class="t g" style="left:251px;top:300px;width:64px;color:#fff;">2,08</div>
<div class="t g" style="left:318px;top:300px;width:64px;color:#000;">10</div>
<div class="t g" style="left:385px;top:300px;width:59px;color:#000;">20,8</div>
<div class="t g" style="left:447px;top:300px;width:94px;color:#000;">Кафе</div>
<div class="t g" style="left:606px;top:300px;width:100px;color:#000;">2,08</div>
<div class="t g" style="left:709px;top:300px;width:118px;color:#000;">147046165</div>
<div class="t g" style="left:4px;top:316px;width:67px;color:#000;">09.02.2022</div>
<div class="t g" style="left:117px;top:316px;width:131px;color:#000;">Сок апельсиновый "Sandora"</div>
<div class="t g" style="left:251px;top:316px;width:64px;color:#000;">0,03</div>
<div class="t g" style="left:318px;top:316px;width:64px;color:#000;">4</div>
<div class="t g" style="left:385px;top:316px;width:59px;color:#000;">0,12</div>
<div class="t g" style="left:447px;top:316px;width:94px;color:#000;">Кафе</div>
<div class="t g" style="left:606px;top:316px;width:100px;color:#000;">0,03</div>
<div class="t g" style="left:709px;top:316px;width:118px;color:#000;">147046175</div>
<div class="t g" style="left:4px;top:332px;width:67px;color:#0000ff;">09.02.2022</div>
<div class="t g" style="left:117px;top:332px;width:131px;color:#0000ff;">Шоколад Snickers, 60гр.</div>
<div class="t g" style="left:251px;top:332px;width:64px;color:#0000ff;">2,16</div>
<div class="t g" style="left:318px;top:332px;width:64px;color:#0000ff;">12</div>
<div class="t g" style="left:385px;top:332px;width:59px;color:#0000ff;">25,92</div>
<div class="t g" style="left:447px;top:332px;width:94px;color:#0000ff;">Кафе</div>
<div class="t g" style="left:606px;top:332px;width:100px;color:#0000ff;">2,16</div>
<div class="t g" style="left:4px;top:348px;width:67px;color:#0000ff;">09.02.2022</div>
<div class="t g" style="left:117px;top:348px;width:131px;color:#0000ff;">Вода пітьевая 0,5л пэт</div>
<div class="t g" style="left:251px;top:348px;width:64px;color:#0000ff;">1,17</div>
<div class="t g" style="left:318px;top:348px;width:64px;color:#0000ff;">7</div>
<div class="t g" style="left:385px;top:348px;width:59px;color:#0000ff;">8,19</div>
<div class="t g" style="left:447px;top:348px;width:94px;color:#0000ff;">Кафе</div>
<div class="t g" style="left:606px;top:348px;width:100px;color:#0000ff;">1,17</div>
<div class="t g" style="left:4px;top:364px;width:67px;color:#0000ff;">09.02.2022</div>
<div class="t g" style="left:117px;top:364px;width:131px;color:#0000ff;">Чипсы "Pringles" Original</div>
<div class="t g" style="left:251px;top:364px;width:64px;color:#0000ff;">7,42</div>
<div class="t g" style="left:318px;top:364px;width:64px;color:#0000ff;">4</div>
<div class="t g" style="left:385px;top:364px;width:59px;color:#0000ff;">29,68</div>
<div class="t g" style="left:447px;top:364px;width:94px;color:#0000ff;">Кафе</div>
<div class="t g" style="left:606px;top:364px;width:100px;color:#0000ff;">7,42</div>
<div class="t g" style="left:4px;top:380px;width:67px;color:#0000ff;">09.02.2022</div>
<div class="t g" style="left:117px;top:380px;width:131px;color:#0000ff;">Жевательная резинка "Stimorol"</div>
<div class="t g" style="left:251px;top:380px;width:64px;color:#0000ff;">3,14</div>
<div class="t g" style="left:318px;top:380px;width:64px;color:#0000ff;">3</div>
<div class="t g" style="left:385px;top:380px;width:59px;color:#0000ff;">9,42</div>
<div class="t g" style="left:447px;top:380px;width:94px;color:#0000ff;">Кафе</div>
<div class="t g" style="left:606px;top:380px;width:100px;color:#0000ff;">3,14</div>
<div class="ab" style="left:1px;top:425px;width:883px;height:16px;background:#0078d7;"></div>
<div class="ab" style="left:883px;top:425px;width:1px;height:16px;background:#fff;"></div>
<div class="ab" style="left:71px;top:425px;width:1px;height:16px;background:#000;"></div>
<div class="ab" style="left:114px;top:425px;width:1px;height:16px;background:#000;"></div>
<div class="ab" style="left:248px;top:425px;width:1px;height:16px;background:#000;"></div>
<div class="ab" style="left:315px;top:425px;width:1px;height:16px;background:#000;"></div>
<div class="ab" style="left:382px;top:425px;width:1px;height:16px;background:#000;"></div>
<div class="ab" style="left:444px;top:425px;width:1px;height:16px;background:#000;"></div>
<div class="ab" style="left:541px;top:425px;width:1px;height:16px;background:#000;"></div>
<div class="ab" style="left:603px;top:425px;width:1px;height:16px;background:#000;"></div>
<div class="ab" style="left:706px;top:425px;width:1px;height:16px;background:#000;"></div>
<div class="ab" style="left:827px;top:425px;width:1px;height:16px;background:#000;"></div>
<div class="t g" style="left:316px;top:426px;width:65px;text-align:right;color:#fff">40</div>
<div class="t g" style="left:383px;top:426px;width:60px;text-align:right;color:#fff">94,13</div>
<div class="ab" style="left:1px;top:299px;width:883px;height:32px;background:transparent;border:2px solid #c81414"></div>
<div class="ab" style="left:884px;top:282px;width:16px;height:159px;background:#f0f0f0;"></div>
<div class="ab" style="left:885px;top:299px;width:15px;height:68px;background:#cdcdcd;"></div>
<svg style="left:888px;top:288px" width="8" height="7"><path d="M0 6V3.4L4 0 8 3.4V6L4 2.9z" fill="#606060"/></svg>
<svg style="left:888px;top:430px" width="8" height="7"><path d="M0 0.5v2.6L4 6.5 8 3.1V0.5L4 3.6z" fill="#606060"/></svg>
<div class="ab" style="left:1px;top:441px;width:900px;height:16px;background:#f0f0f0;"></div>
<div class="ab" style="left:104px;top:442px;width:17px;height:15px;background:#cdcdcd;"></div>
<svg style="left:6px;top:446px" width="6" height="7"><path d="M6.5 0H3.7L0 3.5 3.7 7h2.8L2.8 3.5z" fill="#606060"/></svg>
<svg style="left:872px;top:446px" width="6" height="7"><path d="M0 0h2.8l3.7 3.5-3.7 3.5H0l3.7-3.5z" fill="#606060"/></svg>
<div class="ab" style="left:900px;top:32px;width:1px;height:430px;background:#a0a0a0;"></div>
<div class="ab" style="left:1px;top:461px;width:900px;height:1px;background:#a0a0a0;"></div>
<div class="ab" style="left:1px;top:462px;width:900px;height:2px;background:#f8f8f8;"></div>
<div class="ab" style="left:1px;top:464px;width:741px;height:17px;background:transparent;border-top:1px solid #a0a0a0;border-left:1px solid #a0a0a0;border-right:1px solid #fff;border-bottom:1px solid #fff"></div>
<div class="ab" style="left:743px;top:464px;width:158px;height:17px;background:transparent;border-top:1px solid #a0a0a0;border-left:1px solid #a0a0a0;border-right:1px solid #fff;border-bottom:1px solid #fff"></div>
<div class="t g" style="left:2px;top:465px;width:200px;color:#000;letter-spacing:0.15px;font-size:11px">Нет фильтрации</div>
<svg style="left:886px;top:466px" width="15" height="15"><path d="M3.5 14.5L13.5 4.5M7.5 14.5L13.5 8.5M11.5 14.5L13.5 12.5" stroke="#999" stroke-width="1.6"/><path d="M4.5 15.5L14.5 5.5M8.5 15.5L14.5 9.5M12.5 15.5L14.5 13.5" stroke="#fff" stroke-width="0.8"/></svg>
<svg style="left:372px;top:19px;z-index:10" width="16" height="23" viewBox="0 0 16 23"><path d="M2.5 2.3V18.2L6.3 14.8L9.3 20.8L11.9 19.7L9.2 13.9H14.2Z" fill="#fff" stroke="#1a1a1a" stroke-width="1" stroke-linejoin="round"/></svg>
</body></html>
